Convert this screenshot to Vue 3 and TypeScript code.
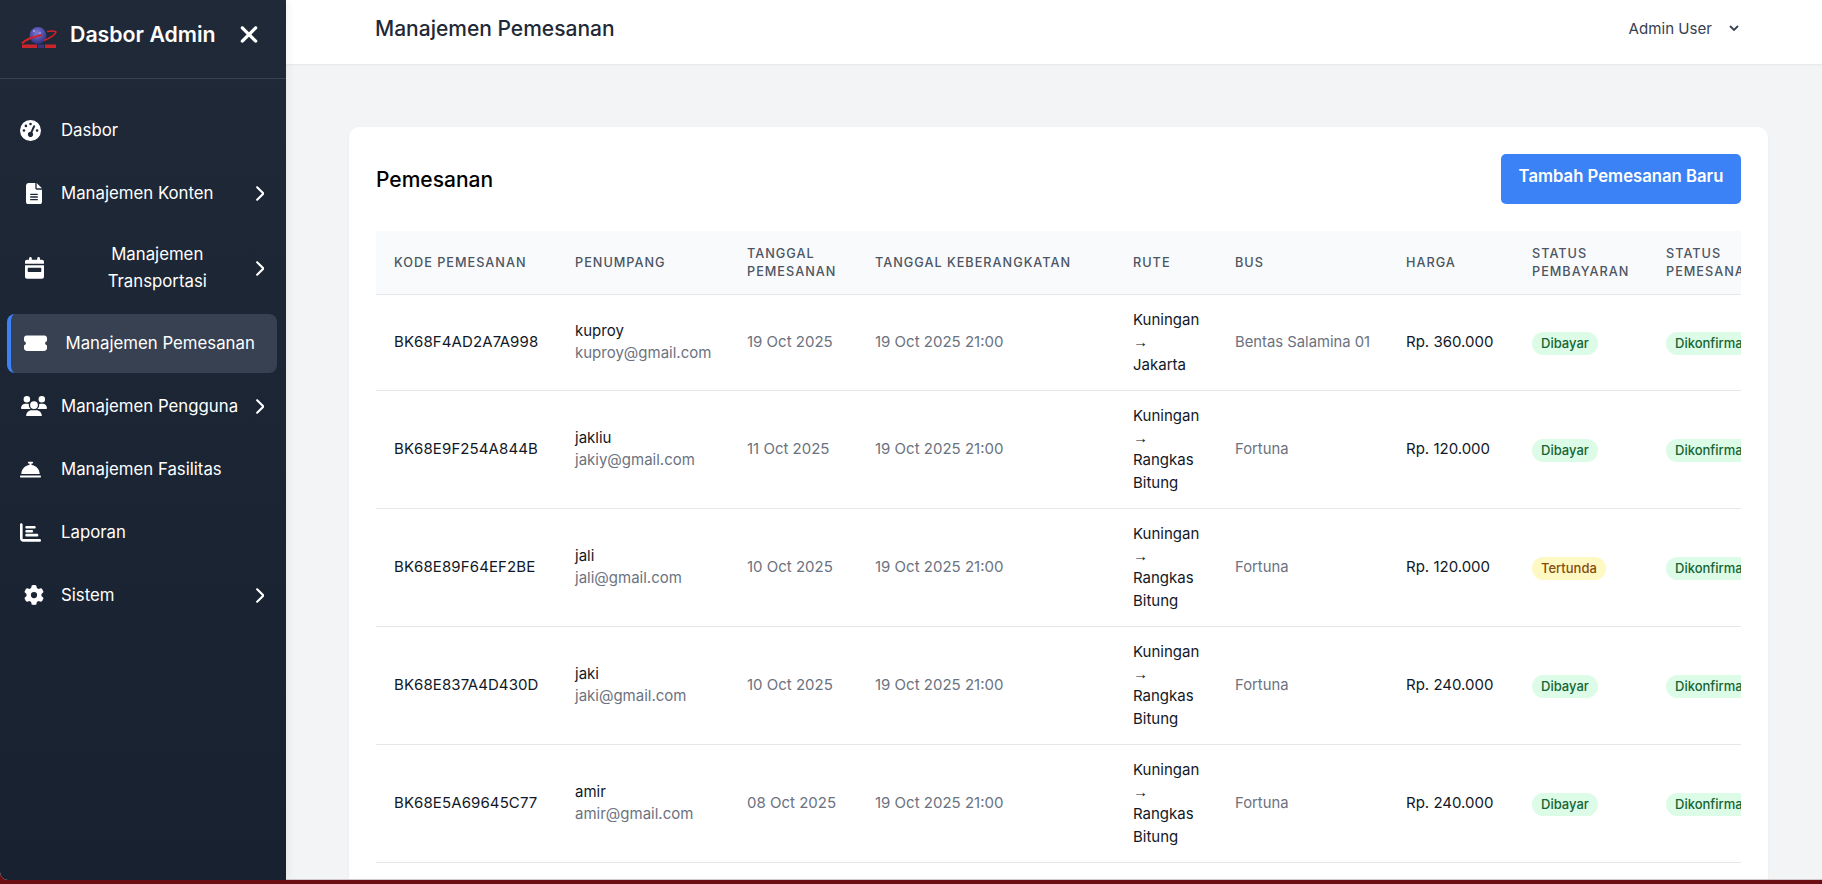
<template>
  <div class="layout">
    <aside class="sidebar">
      <div class="brand">
        <svg class="brand-logo" viewBox="0 0 37 24" aria-hidden="true">
          <defs>
            <radialGradient id="globe" cx="45%" cy="35%" r="70%">
              <stop offset="0%" stop-color="#7d78d8" />
              <stop offset="100%" stop-color="#2b2a78" />
            </radialGradient>
          </defs>
          <circle cx="18" cy="9.500" r="8.500" fill="url(#globe)" />
          <circle cx="14" cy="5" r="0.800" fill="#dfe0ff" />
          <circle cx="20" cy="7" r="0.700" fill="#dfe0ff" />
          <circle cx="15" cy="10" r="0.600" fill="#dfe0ff" />
          <path d="M2 17.500C6 13 14 10.500 22 9" fill="none" stroke="#d3222a" stroke-width="2.200" />
          <path d="M27 5.500c4-.6 8-.8 9 .5-1 2.500-6 6-12 8.500" fill="none" stroke="#d3222a" stroke-width="1.600" />
          <rect x="2" y="18.500" width="15" height="3.500" fill="#c8262c" />
          <rect x="18" y="18.500" width="6" height="3.500" fill="#3a3580" />
          <rect x="25" y="18.500" width="11" height="3.500" fill="#c8262c" />
        </svg>
        <span class="brand-title">Dasbor Admin</span>
        <svg class="brand-close" viewBox="0 0 384 512" aria-hidden="true"><path :d="icons.xmark" /></svg>
      </div>

      <nav class="nav">
        <a
          v-for="item in navItems"
          :key="item.label"
          class="nav-item"
          :class="{ active: item.active, 'has-sub': item.hasSub, wrap: item.wrap }"
        >
          <span class="nav-icon">
            <svg :viewBox="item.box" :style="{ width: item.size + 'px' }" aria-hidden="true"><path :d="icons[item.icon]" /></svg>
          </span>
          <span class="nav-label">{{ item.label }}</span>
          <svg v-if="item.hasSub" class="nav-chevron" viewBox="0 0 320 512" aria-hidden="true"><path :d="icons.chevron" /></svg>
        </a>
      </nav>
    </aside>

    <div class="main">
      <header class="topbar">
        <h1 class="topbar-title">Manajemen Pemesanan</h1>
        <div class="user">
          <span>Admin User</span>
          <svg class="user-caret" viewBox="0 0 12 12" aria-hidden="true">
            <path d="M2 4l4 4 4-4" fill="none" stroke="currentColor" stroke-width="1.800" />
          </svg>
        </div>
      </header>

      <main class="content">
        <section class="card">
          <div class="card-head">
            <h2 class="card-title">Pemesanan</h2>
            <button type="button" class="add-btn">Tambah Pemesanan Baru</button>
          </div>

          <div class="table-wrap">
            <table class="bookings">
              <colgroup>
                <col v-for="(w, i) in colWidths" :key="i" :style="{ width: w + 'px' }" />
              </colgroup>
              <thead>
                <tr>
                  <th>Kode Pemesanan</th>
                  <th>Penumpang</th>
                  <th>Tanggal Pemesanan</th>
                  <th>Tanggal Keberangkatan</th>
                  <th>Rute</th>
                  <th>Bus</th>
                  <th>Harga</th>
                  <th>Status Pembayaran</th>
                  <th>Status Pemesanan</th>
                </tr>
              </thead>
              <tbody>
                <tr v-for="b in bookings" :key="b.code">
                  <td class="strong code">{{ b.code }}</td>
                  <td>
                    <div class="strong">{{ b.name }}</div>
                    <div class="muted">{{ b.email }}</div>
                  </td>
                  <td class="muted">{{ b.booked }}</td>
                  <td class="muted">19 Oct 2025 21:00</td>
                  <td class="strong">{{ b.from }} <span class="arrow">→</span> {{ b.to }}</td>
                  <td class="muted nowrap bus">{{ b.bus }}</td>
                  <td class="strong">{{ b.price }}</td>
                  <td><span class="badge" :class="b.paid === 'Dibayar' ? 'green' : 'yellow'">{{ b.paid }}</span></td>
                  <td class="nowrap"><span class="badge green">Dikonfirmasi</span></td>
                </tr>
              </tbody>
            </table>
          </div>
        </section>
      </main>
    </div>
  </div>
</template>

<script setup lang="ts">
type IconName = 'gauge' | 'file' | 'calendar' | 'ticket' | 'users' | 'bell' | 'chart' | 'gear'

interface NavItem {
  label: string
  icon: IconName
  box: string
  size: number
  hasSub?: boolean
  active?: boolean
  wrap?: boolean
}

interface Booking {
  code: string
  name: string
  email: string
  booked: string
  from: string
  to: string
  bus: string
  price: string
  paid: string
}

const icons = {
  xmark: 'M342.6 150.6c12.5-12.5 12.5-32.8 0-45.3s-32.8-12.5-45.3 0L192 210.7 86.6 105.4c-12.5-12.5-32.8-12.5-45.3 0s-12.5 32.8 0 45.3L146.7 256 41.4 361.4c-12.5 12.5-12.5 32.8 0 45.3s32.8 12.5 45.3 0L192 301.3 297.4 406.6c12.5 12.5 32.8 12.5 45.3 0s12.5-32.8 0-45.3L237.3 256 342.6 150.6z',
  chevron: 'M310.6 233.4c12.5 12.5 12.5 32.8 0 45.3l-192 192c-12.5 12.5-32.8 12.5-45.3 0s-12.5-32.8 0-45.3L242.7 256 73.4 86.6c-12.5-12.5-12.5-32.8 0-45.3s32.8-12.5 45.3 0l192 192z',
  gauge: 'M0 256a256 256 0 1 1 512 0A256 256 0 1 1 0 256zM288 96a32 32 0 1 0 -64 0 32 32 0 1 0 64 0zM256 416c35.3 0 64-28.7 64-64c0-17.4-6.9-33.1-18.1-44.6L366 161.7c5.3-12.1-.2-26.3-12.3-31.6s-26.3 .2-31.6 12.3L257.9 288c-.6 0-1.3 0-1.900 0c-35.3 0-64 28.7-64 64s28.7 64 64 64zM176 144a32 32 0 1 0 -64 0 32 32 0 1 0 64 0zM96 288a32 32 0 1 0 0-64 32 32 0 1 0 0 64zm352-32a32 32 0 1 0 -64 0 32 32 0 1 0 64 0z',
  file: 'M64 0C28.7 0 0 28.7 0 64V448c0 35.3 28.7 64 64 64H320c35.3 0 64-28.7 64-64V160H256c-17.7 0-32-14.3-32-32V0H64zM256 0V128H384L256 0zM112 256H272c8.8 0 16 7.2 16 16s-7.2 16-16 16H112c-8.8 0-16-7.2-16-16s7.2-16 16-16zm0 64H272c8.8 0 16 7.2 16 16s-7.2 16-16 16H112c-8.8 0-16-7.2-16-16s7.2-16 16-16zm0 64H272c8.8 0 16 7.2 16 16s-7.2 16-16 16H112c-8.8 0-16-7.2-16-16s7.2-16 16-16z',
  calendar: 'M128 0c17.7 0 32 14.3 32 32V64H288V32c0-17.7 14.3-32 32-32s32 14.3 32 32V64h48c26.5 0 48 21.5 48 48v48H0V112C0 85.5 21.5 64 48 64H96V32c0-17.7 14.3-32 32-32zM0 192H448V464c0 26.5-21.5 48-48 48H48c-26.5 0-48-21.5-48-48V192zM80 256c-8.8 0-16 7.2-16 16v64c0 8.8 7.2 16 16 16H368c8.8 0 16-7.2 16-16V272c0-8.8-7.2-16-16-16H80z',
  ticket: 'M0 128C0 92.7 28.7 64 64 64H512c35.3 0 64 28.7 64 64v64c0 8.8-7.4 15.7-15.7 18.6C541.5 217.1 528 235 528 256s13.5 38.9 32.3 45.4c8.3 2.9 15.7 9.8 15.7 18.6v64c0 35.3-28.7 64-64 64H64c-35.3 0-64-28.7-64-64V320c0-8.8 7.4-15.7 15.7-18.6C34.5 294.9 48 277 48 256s-13.5-38.9-32.3-45.4C7.4 207.7 0 200.8 0 192V128z',
  users: 'M144 0a80 80 0 1 1 0 160A80 80 0 1 1 144 0zM512 0a80 80 0 1 1 0 160A80 80 0 1 1 512 0zM0 298.7C0 239.8 47.8 192 106.7 192h42.7c15.9 0 31 3.5 44.6 9.7c-1.3 7.2-1.9 14.7-1.9 22.3c0 38.2 16.8 72.5 43.3 96c-.2 0-.4 0-.7 0H21.3C9.6 320 0 310.4 0 298.7zM405.3 320c-.2 0-.4 0-.7 0c26.6-23.5 43.3-57.8 43.3-96c0-7.6-.7-15-1.9-22.3c13.6-6.3 28.7-9.7 44.6-9.7h42.7C592.2 192 640 239.8 640 298.7c0 11.8-9.6 21.3-21.3 21.3H405.3zM224 224a96 96 0 1 1 192 0 96 96 0 1 1 -192 0zM128 485.3C128 411.7 187.7 352 261.3 352H378.7C452.3 352 512 411.7 512 485.3c0 14.7-11.9 26.7-26.7 26.7H154.7c-14.7 0-26.7-11.9-26.7-26.7z',
  bell: 'M216 64c-13.3 0-24 10.7-24 24s10.7 24 24 24h16v33.3C119.6 157.2 32 252.4 32 368H480c0-115.6-87.6-210.8-200-222.7V112h16c13.3 0 24-10.7 24-24s-10.7-24-24-24H256 216zM24 400c-13.3 0-24 10.7-24 24s10.7 24 24 24H488c13.3 0 24-10.7 24-24s-10.7-24-24-24H24z',
  chart: 'M32 32c17.7 0 32 14.3 32 32V400c0 8.8 7.2 16 16 16H480c17.7 0 32 14.3 32 32s-14.3 32-32 32H80c-44.2 0-80-35.8-80-80V64C0 46.3 14.3 32 32 32zm96 96c0-17.7 14.3-32 32-32l192 0c17.7 0 32 14.3 32 32s-14.3 32-32 32l-192 0c-17.7 0-32-14.3-32-32zm32 64H288c17.7 0 32 14.3 32 32s-14.3 32-32 32H160c-17.7 0-32-14.3-32-32s14.3-32 32-32zm0 96H416c17.7 0 32 14.3 32 32s-14.3 32-32 32H160c-17.7 0-32-14.3-32-32s14.3-32 32-32z',
  gear: 'M495.9 166.6c3.2 8.7 .5 18.4-6.4 24.6l-43.3 39.4c1.1 8.3 1.7 16.8 1.7 25.4s-.6 17.1-1.7 25.4l43.3 39.4c6.9 6.2 9.6 15.9 6.4 24.6c-4.4 11.9-9.7 23.3-15.8 34.3l-4.7 8.1c-6.6 11-14 21.4-22.1 31.2c-5.9 7.2-15.7 9.6-24.5 6.8l-55.7-17.7c-13.4 10.3-28.2 18.9-44 25.4l-12.5 57.1c-2 9.1-9 16.3-18.2 17.8c-13.8 2.3-28 3.5-42.5 3.5s-28.7-1.2-42.5-3.5c-9.2-1.5-16.2-8.7-18.2-17.8l-12.5-57.1c-15.8-6.5-30.6-15.1-44-25.4L83.1 425.9c-8.8 2.8-18.6 .3-24.5-6.8c-8.1-9.8-15.5-20.2-22.1-31.2l-4.7-8.1c-6.1-11-11.4-22.4-15.8-34.3c-3.2-8.7-.5-18.4 6.4-24.6l43.3-39.4C64.6 273.1 64 264.6 64 256s.6-17.1 1.7-25.4L22.4 191.2c-6.9-6.2-9.6-15.9-6.4-24.6c4.4-11.9 9.7-23.3 15.8-34.3l4.7-8.1c6.6-11 14-21.4 22.1-31.2c5.9-7.2 15.7-9.6 24.5-6.8l55.7 17.7c13.4-10.3 28.2-18.9 44-25.4l12.5-57.1c2-9.1 9-16.3 18.2-17.8C227.3 1.2 241.5 0 256 0s28.7 1.2 42.5 3.5c9.2 1.5 16.2 8.7 18.2 17.8l12.5 57.1c15.8 6.5 30.6 15.1 44 25.4l55.7-17.7c8.8-2.8 18.6-.3 24.5 6.8c8.1 9.8 15.5 20.2 22.1 31.2l4.7 8.1c6.1 11 11.4 22.4 15.8 34.3zM256 336a80 80 0 1 0 0-160 80 80 0 1 0 0 160z',
}

const navItems: NavItem[] = [
  { label: 'Dasbor', icon: 'gauge', box: '0 0 512 512', size: 21 },
  { label: 'Manajemen Konten', icon: 'file', box: '0 0 384 512', size: 16, hasSub: true },
  { label: 'Manajemen Transportasi', icon: 'calendar', box: '0 0 448 512', size: 19, hasSub: true, wrap: true },
  { label: 'Manajemen Pemesanan', icon: 'ticket', box: '0 0 576 512', size: 23, active: true },
  { label: 'Manajemen Pengguna', icon: 'users', box: '0 0 640 512', size: 26, hasSub: true },
  { label: 'Manajemen Fasilitas', icon: 'bell', box: '0 0 512 512', size: 21 },
  { label: 'Laporan', icon: 'chart', box: '0 0 512 512', size: 21 },
  { label: 'Sistem', icon: 'gear', box: '0 0 512 512', size: 20, hasSub: true },
]

const colWidths = [181, 172, 128, 258, 102, 171, 126, 134, 149]

const bookings: Booking[] = [
  { code: 'BK68F4AD2A7A998', name: 'kuproy', email: 'kuproy@gmail.com', booked: '19 Oct 2025', from: 'Kuningan', to: 'Jakarta', bus: 'Bentas Salamina 01', price: 'Rp. 360.000', paid: 'Dibayar' },
  { code: 'BK68E9F254A844B', name: 'jakliu', email: 'jakiy@gmail.com', booked: '11 Oct 2025', from: 'Kuningan', to: 'Rangkas Bitung', bus: 'Fortuna', price: 'Rp. 120.000', paid: 'Dibayar' },
  { code: 'BK68E89F64EF2BE', name: 'jali', email: 'jali@gmail.com', booked: '10 Oct 2025', from: 'Kuningan', to: 'Rangkas Bitung', bus: 'Fortuna', price: 'Rp. 120.000', paid: 'Tertunda' },
  { code: 'BK68E837A4D430D', name: 'jaki', email: 'jaki@gmail.com', booked: '10 Oct 2025', from: 'Kuningan', to: 'Rangkas Bitung', bus: 'Fortuna', price: 'Rp. 240.000', paid: 'Dibayar' },
  { code: 'BK68E5A69645C77', name: 'amir', email: 'amir@gmail.com', booked: '08 Oct 2025', from: 'Kuningan', to: 'Rangkas Bitung', bus: 'Fortuna', price: 'Rp. 240.000', paid: 'Dibayar' },
]
</script>

<style>
html,
body {
  margin: 0;
  height: 884px;
  overflow: hidden;
  background: #6b0d12;
}
</style>

<style scoped>
.layout {
  display: flex;
  height: 880px;
  overflow: hidden;
  border-bottom-left-radius: 8px;
  font-family: Inter, "Noto Sans", sans-serif;
  background: #f3f4f6;
}

.sidebar {
  flex: 0 0 286px;
  background: linear-gradient(180deg, #1f2937 0%, #182130 100%);
  box-shadow: 2px 0 8px rgba(0, 0, 0, 0.06);
  color: #ffffff;
  z-index: 2;
}

.brand {
  display: flex;
  align-items: center;
  box-sizing: border-box;
  height: 79px;
  padding: 0 27px 10px 20px;
  border-bottom: 1px solid #374151;
}

.brand-logo {
  width: 37px;
  height: 24px;
  margin-top: 8px;
}

.brand-title {
  flex: 1;
  margin-left: 13px;
  font-size: 21.300px;
  font-weight: 600;
}

.brand-close {
  width: 20px;
  height: 27px;
  fill: #ffffff;
}

.nav {
  display: flex;
  flex-direction: column;
  gap: 4px;
  padding-top: 22px;
}

.nav-item {
  display: flex;
  align-items: center;
  box-sizing: border-box;
  min-height: 59px;
  padding: 14.250px 22px 14.250px 20px;
  font-size: 16.800px;
  line-height: 27px;
}

.nav-icon {
  display: flex;
  flex: 0 0 41px;
  align-items: center;
}

.nav-icon svg {
  display: block;
  fill: #ffffff;
}

.has-sub .nav-icon {
  justify-content: center;
  flex-basis: 28px;
  margin-right: 13px;
}

.nav-label {
  flex: 1;
}

.wrap .nav-label {
  padding: 0 30px;
  text-align: center;
}

.nav-chevron {
  flex: none;
  width: 10.500px;
  height: 17px;
  fill: #ffffff;
}

.nav-item.active {
  margin: 0 9px 0 7px;
  padding-left: 13px;
  border-left: 4px solid #3b82f6;
  border-radius: 8px;
  background: #374151;
}

.active .nav-icon {
  flex-basis: 41.500px;
}

.main {
  display: flex;
  flex: 1;
  flex-direction: column;
  min-width: 0;
  border-bottom: 1px solid #cfc9c9;
}

.topbar {
  display: flex;
  flex: none;
  align-items: center;
  justify-content: space-between;
  box-sizing: border-box;
  height: 64px;
  padding: 0 82px 8px 89px;
  background: #ffffff;
  box-shadow: 0 1px 2px rgba(0, 0, 0, 0.06);
}

.topbar-title {
  margin: 0;
  color: #1f2937;
  font-size: 21px;
  font-weight: 550;
}

.user {
  display: flex;
  align-items: center;
  gap: 16px;
  color: #374151;
  font-size: 15.100px;
}

.user-caret {
  width: 12px;
  height: 12px;
}

.content {
  flex: 1;
  min-height: 0;
  padding: 63px 54px 0 63px;
  overflow: hidden;
}

.card {
  padding: 27px 27px 60px;
  border-radius: 10px;
  background: #ffffff;
  box-shadow: 0 1px 3px rgba(0, 0, 0, 0.05);
}

.card-head {
  display: flex;
  align-items: center;
  justify-content: space-between;
  margin-bottom: 27px;
}

.card-title {
  margin: 0;
  color: #000000;
  font-size: 21px;
  font-weight: 550;
}

.add-btn {
  width: 240px;
  height: 50px;
  padding: 0 0 6px;
  border: 0;
  border-radius: 5px;
  background: #3b82f6;
  color: #ffffff;
  font-family: inherit;
  font-size: 16.700px;
  font-weight: 600;
}

.table-wrap {
  overflow: hidden;
}

.bookings {
  width: 1421px;
  border-collapse: collapse;
  table-layout: fixed;
  font-size: 15px;
  line-height: 22.250px;
}

.bookings th {
  height: 62px;
  padding: 1px 18px 0;
  border-bottom: 1px solid #e5e7eb;
  background: #f9fafb;
  color: #4b5563;
  font-size: 12.700px;
  font-weight: 500;
  line-height: 18px;
  letter-spacing: 1px;
  text-align: left;
  text-transform: uppercase;
}

.bookings td {
  padding: 14px 18px;
  border-bottom: 1px solid #e5e7eb;
  vertical-align: middle;
}

.code {
  letter-spacing: 0.1px;
}

.bookings .bus {
  font-size: 14.800px;
}

.strong {
  color: #111827;
}

.muted {
  color: #6b7280;
}

.arrow {
  font-family: "Liberation Sans", sans-serif;
}

.nowrap {
  white-space: nowrap;
}

.badge {
  display: inline-block;
  position: relative;
  top: 1px;
  padding: 0 9px;
  border-radius: 999px;
  font-size: 13px;
  font-weight: 500;
  line-height: 23px;
}

.green {
  background: #dcfce7;
  color: #166534;
}

.yellow {
  background: #fef9c3;
  color: #854d0e;
}
</style>
